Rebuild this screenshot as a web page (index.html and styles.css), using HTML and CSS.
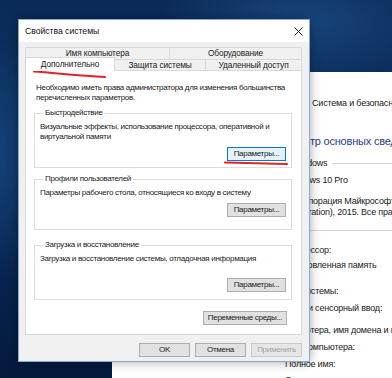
FILE: index.html
```html
<!DOCTYPE html>
<html lang="ru">
<head>
    <meta charset="UTF-8">
    <meta name="viewport" content="width=device-width, initial-scale=1.0">
    <title>Свойства системы</title>
    <link rel="stylesheet" href="styles.css">
</head>
<body>

<div class="explorer">
    <div class="crumbs">Система и безопасность &nbsp;›&nbsp; Система</div>
    <h1 class="page-title">Просмотр основных сведений о вашем компьютере</h1>
    <div class="section sec-edition"><span>Выпуск Windows</span></div>
    <div class="info info-edition">Windows 10 Pro</div>
    <div class="info info-copy">© Корпорация Майкрософт (Microsoft<br>Corporation), 2015. Все права защищены.</div>
    <div class="section sec-system"><span>Система</span></div>
    <div class="info info-cpu">Процессор:</div>
    <div class="info info-ram">Установленная память<br>(ОЗУ):</div>
    <div class="info info-type">Тип системы:</div>
    <div class="info info-pen">Перо и сенсорный ввод:</div>
    <div class="section sec-name"><span>Имя компьютера, имя домена и параметры рабочей группы</span></div>
    <div class="info info-pc">Имя компьютера:</div>
    <div class="info info-full">Полное имя:</div>
    <div class="info info-desc">Описание:</div>
</div>

<div class="dialog">
    <div class="titlebar">
        <span>Свойства системы</span>
        <svg class="close" width="9" height="9" viewBox="0 0 9 9">
            <path d="M0.5 0.5 L8.5 8.5 M8.5 0.5 L0.5 8.5" stroke="#222" stroke-width="1" fill="none"/>
        </svg>
    </div>

    <div class="dialog-body">
        <div class="tabs">
            <div class="tab-row back">
                <div class="tab tab-name">Имя компьютера</div>
                <div class="tab tab-hw">Оборудование</div>
            </div>
            <div class="tab-row front">
                <div class="tab tab-adv active">Дополнительно</div>
                <div class="tab tab-prot">Защита системы</div>
                <div class="tab tab-remote">Удаленный доступ</div>
            </div>
        </div>

        <div class="panel">
            <p class="intro">Необходимо иметь права администратора для изменения большинства<br>перечисленных параметров.</p>

            <fieldset class="group group-perf">
                <legend>Быстродействие</legend>
                <p>Визуальные эффекты, использование процессора, оперативной и<br>виртуальной памяти</p>
                <div class="group-actions"><button class="btn focused">Параметры...</button></div>
            </fieldset>

            <fieldset class="group group-profiles">
                <legend>Профили пользователей</legend>
                <p>Параметры рабочего стола, относящиеся ко входу в систему</p>
                <div class="group-actions"><button class="btn">Параметры...</button></div>
            </fieldset>

            <fieldset class="group group-boot">
                <legend>Загрузка и восстановление</legend>
                <p>Загрузка и восстановление системы, отладочная информация</p>
                <div class="group-actions"><button class="btn">Параметры...</button></div>
            </fieldset>

            <div class="panel-actions"><button class="btn btn-wide">Переменные среды...</button></div>
        </div>

        <div class="dialog-actions">
            <button class="btn btn-dlg">OK</button>
            <button class="btn btn-dlg">Отмена</button>
            <button class="btn btn-dlg" disabled>Применить</button>
        </div>
    </div>
</div>

<svg class="marks" width="392" height="378" viewBox="0 0 392 378">
    <path d="M34 71.5 C55 73, 80 75.5, 105 77" stroke="#e2232b" stroke-width="2" fill="none" stroke-linecap="round"/>
    <path d="M225 162.5 C245 163, 265 163.5, 287 164" stroke="#e2232b" stroke-width="2" fill="none" stroke-linecap="round"/>
</svg>

</body>
</html>
```

FILE: styles.css
```css
* {
    box-sizing: border-box;
}
html, body {
    margin: 0;
    padding: 0;
}
body {
    width: 392px;
    height: 378px;
    overflow: hidden;
    position: relative;
    font-family: "Liberation Sans", Arial, sans-serif;
    font-size: 8px;
    color: #1a1a1a;
    background:
        radial-gradient(ellipse 140px 60px at 300px 20px, rgba(40, 100, 170, 0.45), rgba(40, 100, 170, 0)),
        radial-gradient(ellipse 60px 120px at 0px 160px, rgba(30, 80, 140, 0.5), rgba(30, 80, 140, 0)),
        linear-gradient(180deg, #0b2b57 0%, #0c3263 35%, #072550 70%, #041a3c 100%);
}

/* background window (control panel) */
.explorer {
    position: absolute;
    left: 112px;
    top: 72px;
    right: 0;
    bottom: 0;
    background: #fff;
    padding: 26px 0 0 149px;
    white-space: nowrap;
    font-size: 9px;
    letter-spacing: -0.2px;
    color: #222;
    overflow: hidden;
}
.crumbs {
    margin-left: 51px;
    line-height: 10px;
    height: 10px;
}
.page-title {
    margin: 25px 0 0 11px;
    font-size: 11px;
    font-weight: normal;
    line-height: 16px;
    color: #26428b;
}
.section {
    display: flex;
    align-items: center;
    gap: 5px;
    line-height: 10px;
}
.section::after {
    content: "";
    flex: 1;
    height: 1px;
    background: #d5d5d5;
}
.info {
    margin-left: 24px;
    line-height: 10px;
}
.sec-edition { margin-top: 9px; }
.info-edition { margin-top: 7px; }
.info-copy { margin-top: 11px; line-height: 11px; }
.sec-system { margin-top: 7px; }
.info-cpu { margin-top: 10px; }
.info-ram { margin-top: 5px; line-height: 11px; }
.info-type { margin-top: 4px; }
.info-pen { margin-top: 7px; }
.sec-name { margin-top: 12px; }
.info-pc { margin-top: 7px; }
.info-full { margin-top: 7px; }
.info-desc { margin-top: 6px; }

/* dialog */
.dialog {
    position: absolute;
    left: 18px;
    top: 19px;
    width: 292px;
    height: 343px;
    border: 1px solid #86a9d6;
    background: #f0f0f0;
    box-shadow: 0 0 10px rgba(0, 0, 0, 0.35);
    white-space: nowrap;
}
.titlebar {
    height: 22px;
    background: #fff;
    display: flex;
    align-items: center;
    justify-content: space-between;
    padding: 0 6px 0 6px;
    font-size: 8.6px;
    color: #111;
}
.close {
    display: block;
}
.dialog-body {
    padding: 5px 7px 0 6px;
    letter-spacing: -0.3px;
}

/* tabs */
.tab-row {
    display: flex;
}
.tab-row.front {
    height: 11px;
    align-items: flex-start;
}
.tab {
    border: 1px solid #d9d9d9;
    border-bottom: none;
    background: #f0f0f0;
    text-align: center;
    height: 12px;
    line-height: 11px;
    margin-left: -1px;
    font-size: 8.3px;
    letter-spacing: -0.1px;
}
.tab:first-child {
    margin-left: 0;
}
.front .tab {
    height: 11px;
    line-height: 10px;
}
.tab-name { width: 145px; }
.tab-hw { width: 133px; }
.tab-adv { width: 90px; }
.tab-prot { width: 92px; }
.tab-remote { width: 97px; }
.front .tab.active {
    position: relative;
    z-index: 1;
    background: #fff;
    height: 14px;
    margin-top: -2px;
    line-height: 13px;
}

/* tab page */
.panel {
    background: #fff;
    border: 1px solid #d9d9d9;
    height: 265px;
    padding: 12px 9px 0 8px;
}
.intro {
    margin: 0;
    padding-left: 2px;
    line-height: 10px;
}
.group {
    border: 1px solid #dcdcdc;
    margin: 5px 0 0;
    padding: 4px 5px 6px;
    min-width: 0;
}
.group legend {
    padding: 0 2px;
    margin-left: 3px;
    line-height: 10px;
}
.group p {
    margin: 0;
    line-height: 10px;
}
.group-actions {
    display: flex;
    justify-content: flex-end;
    margin-top: 5px;
}
.group-profiles {
    margin-top: 6px;
    padding-bottom: 12px;
}
.group-boot {
    margin-top: 10px;
    padding-bottom: 7px;
}
.group-boot .group-actions {
    margin-top: 14px;
}
.panel-actions {
    display: flex;
    justify-content: flex-end;
    margin-top: 11px;
    padding-right: 5px;
}

/* buttons */
.btn {
    font-family: inherit;
    font-size: 8px;
    letter-spacing: -0.3px;
    color: #1a1a1a;
    height: 14px;
    width: 59px;
    padding: 0;
    line-height: 12px;
    background: #e1e1e1;
    border: 1px solid #adadad;
    border-radius: 0;
}
.btn.focused {
    background: #e5f1fb;
    border-color: #0078d7;
}
.btn-wide {
    width: 84px;
}
.btn-dlg {
    width: 51px;
}
.btn:disabled {
    background: #e6e6e6;
    border-color: #c9c9c9;
    color: #a3a3a3;
}
.dialog-actions {
    display: flex;
    justify-content: flex-end;
    gap: 5px;
    margin-top: 8px;
}

/* red annotations over the screenshot */
.marks {
    position: absolute;
    left: 0;
    top: 0;
    pointer-events: none;
}
```
